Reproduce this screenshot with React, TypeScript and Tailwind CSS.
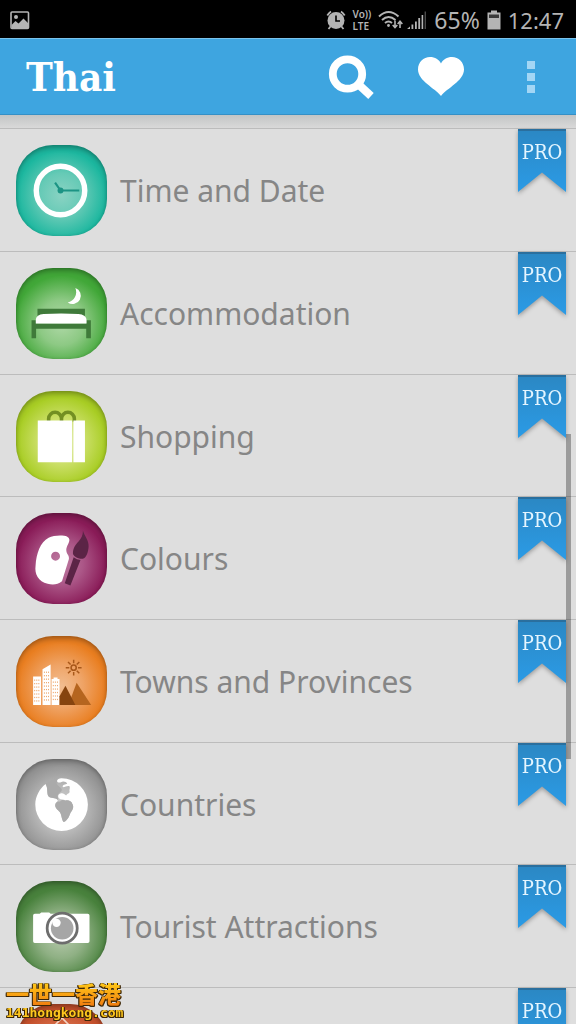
import type { ReactNode } from "react";
import { clsx } from "clsx";

type Category = {
  title?: string;
  tile: string;
  icon: ReactNode;
};

const ClockIcon = () => (
  <svg viewBox="0 0 92 92" className="size-full">
    <circle cx="45" cy="46" r="24.5" fill="none" stroke="#fff" strokeWidth="5.5" />
    <path d="M45 46H64M45 46L39.5 38" fill="none" stroke="#1c9484" strokeWidth="2.2" />
    <circle cx="45" cy="46" r="3" fill="#1c9484" />
  </svg>
);

const BedIcon = () => (
  <svg viewBox="0 0 92 92" className="size-full">
    <path d="M60 20.3A8.3 8.3 0 1 1 52.3 34.8A10.500 10.500 0 0 0 60 20.3Z" fill="#fff" />
    <path d="M21.7 41.3H69.7V52H21.7Z" fill="#3f7a3a" />
    <path d="M15.7 52.7H20.3V56H71V52.7H75.7V71H71V61.5H20.3V71H15.7Z" fill="#3f7a3a" />
    <path d="M20 56V53C20 49 23 47 28 46.6Q45.7 45.4 63 46.6C68 47 71.3 49 71.3 53V56Z" fill="#fff" />
  </svg>
);

const BagIcon = () => (
  <svg viewBox="0 0 92 92" className="size-full">
    <path
      d="M33 31V28A6.5 6.5 0 0 1 46 28V31M46 31V28A6.5 6.5 0 0 1 59 28V31"
      fill="none"
      stroke="#738f22"
      strokeWidth="3.6"
    />
    <path d="M22 29.7H56.8V72H22ZM58 29.7H69.7V72H58Z" fill="#fff" />
  </svg>
);

const PaletteIcon = () => (
  <svg viewBox="0 0 92 92" className="size-full">
    <path
      fillRule="evenodd"
      d="M54 27C54 31 50 34 51 39C51.5 42 54 43 53.5 46.5L46.5 69C42 72.5 37 72.7 32 71.5C22.5 69 18.600 62 19.8 53C20.500 41 24.500 29.500 33 25C38 22.400 48 22.200 51.500 23.8Q54 25 54 27ZM40 39.2A4.5 4.5 0 1 0 40 48.2A4.5 4.5 0 1 0 40 39.2Z"
      fill="#fff"
    />
    <path d="M67.7 18C69 23 74 28 73.4 34C73 39 71.5 45 67.5 46.3C63 46.5 59 44.5 57.6 41.5C57.5 36 59.5 32.5 63 29C66 26 67.7 22.5 67.7 18Z" fill="#5b2446" />
    <path d="M58.3 44.8Q61.5 47.2 65.2 47.6L55 73.2L49.3 71Z" fill="#5b2446" />
  </svg>
);

const windows = [
  { x: 18.8, from: 44, rows: 7 },
  { x: 28.6, from: 36, rows: 9 },
  { x: 37.6, from: 46, rows: 6 },
];

const TownIcon = () => (
  <svg viewBox="0 0 92 92" className="size-full">
    <path d="M17.3 41H25.3V69.7H17.3ZM26.8 33.5L35 28.7V69.7H26.8ZM36 43.5H38V42H42V43.5H44V69.7H36Z" fill="#fff" />
    {windows.map((w) =>
      Array.from({ length: w.rows }, (_, row) =>
        [0, 2.1, 4.2].map((dx) => (
          <rect key={`${w.x}-${row}-${dx}`} x={w.x + dx - 0.4} y={w.from + row * 3.5} width="1" height="1.3" fill="#eda66a" />
        ))
      )
    )}
    <path d="M53 69.7L61.3 47.3L76 69.7Z" fill="#b5651f" />
    <path d="M44 69.7V61L50 50.3L60 69.7Z" fill="#86440f" />
    <circle cx="58.3" cy="32" r="2.6" fill="none" stroke="#a8581a" strokeWidth="1.6" />
    <path
      d="M58.3 27.6V24M58.3 36.4V40M53.9 32H50.3M62.7 32H66.3M55.2 28.9L52.6 26.3M61.4 28.9L64 26.3M55.2 35.1L52.6 37.7M61.4 35.1L64 37.7"
      stroke="#a8581a"
      strokeWidth="1.5"
    />
  </svg>
);

const GlobeIcon = () => (
  <svg viewBox="0 0 92 92" className="size-full">
    <path
      fillRule="evenodd"
      d="M30 25.4C24 30 19.5 38 19.5 46A26.6 26.6 0 1 0 46 19.5C43.5 19.5 41.6 20.5 41.4 22.4C42 24 44 24 45.5 23.4C47.5 22 51 23 51.8 24.8C50 26 47 26 47.2 28C48 29.5 51 26.8 53.5 27.3C55.5 28 53.5 31.2 54.2 33C54 35 52 34.5 50.7 36.8C49 35.5 47.5 34 45 34.8C42.5 35.5 42 38 43.4 39.6C45.5 41.4 48 40.3 50.2 42C53 41.3 56.2 42.8 57 45.5C58.8 48.5 57.4 51.5 55 54.5C53.8 57.5 53 61 48.3 63.8C46 61.5 46.4 57 44.4 53.8C42 51 38.8 49.5 39.8 45.5C40.6 43.4 42.4 43 42.2 41.5C40 38.5 35 40.5 32.6 37.5C31 34 32.5 30 30 25.4Z"
      fill="#fff"
    />
    {/* wider gap between the northern lands and the rim */}
    <path d="M30 25.4C33 22.500 37 20.500 41 19.500L41.6 23C39.500 26 44 27 46 30C47.500 32.500 44 33.500 42.500 36C41.500 38 43.500 40 42 41.5C40 38.5 35 40.5 32.6 37.5C31 34 32.5 30 30 25.4Z" fill="#aaa" />
    <path d="M39.8 45.5C40.6 43.4 42.4 43 44.400 43C46.500 40.800 48 41.300 50.2 42C53 41.3 56.2 42.8 57 45.5C58.8 48.5 57.4 51.5 55 54.5C53.8 57.5 53 61 48.3 63.8C46 61.5 46.4 57 44.4 53.8C42 51 38.8 49.5 39.8 45.5Z" fill="#ababab" />
  </svg>
);

const CameraIcon = () => (
  <svg viewBox="0 0 92 92" className="size-full">
    <path d="M19 33.2H24L25.5 31.8H33.5L35 33.2H72.5Q74.3 33.2 74.3 35V61Q74.3 62.7 72.5 62.7H19Q17.3 62.7 17.3 61V35Q17.3 33.2 19 33.2Z" fill="#fff" />
    <circle cx="46.7" cy="47.7" r="15.2" fill="#fff" stroke="#6d6d6d" strokeWidth="2.8" />
    <circle cx="46.7" cy="47.7" r="11.4" fill="#a6a6a6" />
    <circle cx="41" cy="42.3" r="4.2" fill="#fff" />
  </svg>
);

const RoofIcon = () => (
  <svg viewBox="0 0 92 92" className="size-full">
    <path d="M30 31L46.5 14L63 31" fill="none" stroke="#f3d3c4" strokeWidth="1.6" />
  </svg>
);

const categories: Category[] = [
  {
    title: "Time and Date",
    tile: "bg-[radial-gradient(circle_at_50%_55%,#8ad3c3_0%,#66cab6_32%,#1cb79f_66%)]",
    icon: <ClockIcon />,
  },
  {
    title: "Accommodation",
    tile: "bg-[radial-gradient(circle_at_50%_60%,#b0d9a8_0%,#8dc984_32%,#41a738_66%)]",
    icon: <BedIcon />,
  },
  {
    title: "Shopping",
    tile: "bg-[radial-gradient(circle_at_50%_55%,#dfe9a0_0%,#cbdf68_34%,#a8cd24_66%)]",
    icon: <BagIcon />,
  },
  {
    title: "Colours",
    tile: "bg-[radial-gradient(circle_at_50%_55%,#bd7ba1_0%,#ab5687_32%,#8a1c58_66%)]",
    icon: <PaletteIcon />,
  },
  {
    title: "Towns and Provinces",
    tile: "bg-[radial-gradient(circle_at_50%_55%,#f2bd90_0%,#efa365_32%,#e97e20_66%)]",
    icon: <TownIcon />,
  },
  {
    title: "Countries",
    tile: "bg-[radial-gradient(circle_at_50%_55%,#d0d0d0_0%,#b9b9b9_34%,#949494_66%)]",
    icon: <GlobeIcon />,
  },
  {
    title: "Tourist Attractions",
    tile: "bg-[radial-gradient(circle_at_50%_60%,#b9cbaf_0%,#8fb084_32%,#48813c_66%)]",
    icon: <CameraIcon />,
  },
  {
    tile: "bg-[radial-gradient(circle_at_50%_55%,#e79a7c_0%,#d9714c_35%,#c4502c_66%)]",
    icon: <RoofIcon />,
  },
];

const StatusBar = () => (
  <div className="flex h-[38px] shrink-0 items-center bg-black px-[10px] pt-[2px] text-[#b4b4b4]">
    <svg viewBox="0 0 20 19" className="h-[19px] w-5" aria-hidden="true">
      <rect x="1" y="1" width="17.5" height="16.5" rx="1" fill="none" stroke="currentColor" strokeWidth="1.6" />
      <circle cx="6" cy="6" r="2" fill="currentColor" />
      <path d="M1.5 14L5.5 10L8.5 12.5L13.5 7.5L18 12V17.5H1.5Z" fill="currentColor" />
    </svg>

    <div className="ml-auto flex items-center gap-[7px] pr-[2px]">
      <svg viewBox="0 0 20 20" className="size-5" aria-hidden="true">
        <circle cx="10" cy="10.5" r="8.500" fill="currentColor" />
        <path d="M1.3 5.5A12 12 0 0 1 5 1.5M18.7 5.5A12 12 0 0 0 15 1.5M4.5 16.5L2.5 19M15.5 16.5L17.5 19" stroke="currentColor" strokeWidth="1.8" fill="none" />
        <path d="M10 5.5V11H14" stroke="#000" strokeWidth="1.6" fill="none" />
      </svg>
      <div className="flex flex-col text-[10px] leading-3 font-semibold">
        <span>Vo))</span>
        <span>LTE</span>
      </div>
      <svg viewBox="0 0 26 20" className="-mr-1 h-5 w-[26px]" fill="none" stroke="currentColor" aria-hidden="true">
        <path d="M1 6.5Q10.5-2.5 20.5 6.5M4 10Q10.5 4 17.5 10M7 13Q10.5 10 14 13" strokeWidth="2" />
        <circle cx="10.5" cy="15.5" r="1.4" fill="currentColor" stroke="none" />
        <path d="M17 10.5V17.5M14.7 15L17 17.6L19.3 15M22 18V11.5M19.7 14L22 11.2L24.3 14" strokeWidth="1.6" />
      </svg>
      <svg viewBox="0 0 20 20" className="h-5 w-5" aria-hidden="true">
        <path d="M0 19L3 16.5V19ZM4.500 14.500H6.300V19H4.500ZM8 11.500H9.800V19H8ZM11.300 8H13.100V19H11.300ZM14.600 5H16.200V19H14.600Z" fill="currentColor" />
        <path d="M17.600 1.5H19V19H17.600Z" fill="#4a4a4a" />
      </svg>
      <span className="text-[23px] leading-7">65%</span>
      <svg viewBox="0 0 14 20" className="h-5 w-[14px]" aria-hidden="true">
        <path d="M4 0.5H10V2.5H13.5V19.5H0.5V2.5H4Z" fill="currentColor" />
        <path d="M2 4.5H12V8H2Z" fill="#3a3a3a" />
      </svg>
      <span className="text-[22px] leading-7">12:47</span>
    </div>
  </div>
);

const Header = () => (
  <header className="flex h-[77px] shrink-0 items-center border-t border-b border-t-[#7ac3ec] border-b-[#3590c6] bg-[#3ea5e0] pl-[26px]">
    <h1 className="flex-1 font-['DejaVu_Serif_Condensed','DejaVu_Serif',serif] text-[40px] leading-none font-bold text-white">
      Thai
    </h1>
    <button aria-label="Search" className="flex w-[90px] justify-center">
      <svg viewBox="0 0 46 44" className="h-11 w-[46px]" fill="none" stroke="#fff">
        <circle cx="19.5" cy="19" r="14.7" strokeWidth="7.8" />
        <path d="M29.5 28.5L43 41" strokeWidth="8" />
      </svg>
    </button>
    <button aria-label="Favourites" className="flex w-[90px] justify-center">
      <svg viewBox="0 0 46 39" className="h-[39px] w-[46px]">
        <path d="M23 39C17 31 0 24 0 12.5C0 5 5.5 0 12 0C17 0 21 2.5 23 6.5C25 2.5 29 0 34 0C40.5 0 46 5 46 12.5C46 24 29 31 23 39Z" fill="#fff" />
      </svg>
    </button>
    <button aria-label="More options" className="flex w-[90px] flex-col items-center gap-1">
      <span className="size-2 bg-[#a3d6f5]" />
      <span className="size-2 bg-[#a3d6f5]" />
      <span className="size-2 bg-[#a3d6f5]" />
    </button>
  </header>
);

const ProRibbon = () => (
  <div className="mr-[10px] shrink-0 drop-shadow-[0_2px_2px_rgba(0,0,0,0.3)]">
    <div className="h-[63px] w-12 border-t-2 border-[#2a6f9e] bg-linear-to-b from-[#2b88c4] to-[#2b9be6] pt-[9px] text-center font-['DejaVu_Serif_Condensed','DejaVu_Serif',serif] text-[20px] leading-6 text-[#e4f5ff] [clip-path:polygon(0_0,100%_0,100%_100%,50%_69%,0_100%)]">
      PRO
    </div>
  </div>
);

const CategoryRow = ({ title, tile, icon }: Category) => (
  <li className="flex h-[123px] items-start border-t border-[#bcbcbc] nth-[3n]:h-[122px]">
    <button
      aria-label={title ?? "Next category"}
      className="flex flex-1 items-center gap-[13px] pt-4 pl-4 text-left"
    >
      <span
        className={clsx(
          "size-[91px] shrink-0 rounded-[37px] shadow-[inset_0_3px_5px_rgba(0,0,0,0.28),inset_0_0_3px_rgba(0,0,0,0.1)]",
          tile
        )}
      >
        {icon}
      </span>
      {title && <span className="text-[30px] leading-10 whitespace-nowrap text-[#868686]">{title}</span>}
    </button>
    <ProRibbon />
  </li>
);

const Watermark = () => (
  <div className="absolute bottom-1 left-[6px] flex flex-col items-start [filter:drop-shadow(1px_0_0_#3d2708)_drop-shadow(-1px_0_0_#3d2708)_drop-shadow(0_1px_0_#3d2708)]">
    <span className="bg-linear-to-b from-[#ffd21a] to-[#f07c10] bg-clip-text font-['Noto_Sans_CJK_TC',sans-serif] text-[23px] leading-[26px] font-black text-transparent">
      一世一香港
    </span>
    <span className="font-['DejaVu_Sans_Mono',monospace] text-[13px] leading-[14px] font-bold text-[#ffc81e]">
      141hongkong.com
    </span>
  </div>
);

export default function App() {
  return (
    <div className="relative flex h-dvh flex-col overflow-hidden bg-[#dedede] font-['Noto_Sans',sans-serif]">
      <StatusBar />
      <Header />
      <main className="relative min-h-0 flex-1 overflow-hidden">
        <div className="h-[13px] bg-linear-to-b from-[#c3c5c5] to-[#d9d9d9]" />
        <ul>
          {categories.map((category, index) => (
            <CategoryRow key={index} {...category} />
          ))}
        </ul>
        <div className="absolute top-[319px] right-[5px] h-[325px] w-[5px] bg-black/30" />
      </main>
      <Watermark />
    </div>
  );
}
